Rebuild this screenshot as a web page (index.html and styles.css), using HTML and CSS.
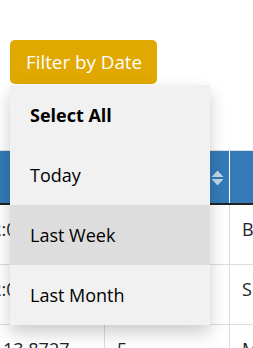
FILE: index.html
```html
<!DOCTYPE html>
<html>
<head>
<meta charset="utf-8">
<link rel="stylesheet" href="styles.css">
</head>
<body>
<div class="page">
  <div class="dropdown">
    <button class="btn">Filter by Date</button>
    <div class="menu">
      <div class="item bold">Select All</div>
      <div class="item">Today</div>
      <div class="item active">Last Week</div>
      <div class="item">Last Month</div>
    </div>
  </div>
  <div class="table-wrap">
    <table class="grid">
      <colgroup>
        <col class="w1">
        <col class="w2">
        <col class="w3">
      </colgroup>
      <thead>
        <tr>
          <th></th>
          <th class="sort"><svg class="sort-icon" width="13" height="16" viewBox="0 0 13 16"><path d="M6.5 0.5 L12.5 7 L0.5 7 Z" /><path d="M6.5 15.5 L12.5 9 L0.5 9 Z" /></svg></th>
          <th></th>
        </tr>
      </thead>
      <tbody>
        <tr><td class="ts">12:00:00</td><td></td><td>Bangkok</td></tr>
        <tr><td class="ts">12:00:00</td><td></td><td>Singapore</td></tr>
        <tr><td>13.8727</td><td>5</td><td>Manila</td></tr>
      </tbody>
    </table>
  </div>
</div>
</body>
</html>
```

FILE: styles.css
```css
html, body {
  margin: 0;
  padding: 0;
  background: #ffffff;
  overflow: hidden;
  font-family: "Open Sans", "Noto Sans", sans-serif;
  font-size: 18px;
  color: #212529;
}

.page {
  padding: 40px 10px 0;
  width: 253px;
  height: 348px;
  box-sizing: border-box;
  overflow: hidden;
}

.dropdown {
  position: relative;
  display: inline-block;
  z-index: 2;
}

.btn {
  display: block;
  margin: 0;
  border: none;
  border-radius: 5px;
  background: #e0a800;
  color: #ffffff;
  font-family: "Open Sans", "Noto Sans", sans-serif;
  font-size: 18.8px;
  line-height: 24px;
  padding: 10px 0 10px 16px;
  width: 147px;
  text-align: left;
  white-space: nowrap;
}

.menu {
  position: absolute;
  top: 45px;
  left: 0;
  width: 200px;
  background: #f1f1f1;
  box-shadow: 0 8px 16px 0 rgba(0, 0, 0, 0.2);
}

.item {
  padding: 20px 20px;
  line-height: 20px;
  color: #000000;
  white-space: nowrap;
}

.item.bold {
  font-weight: 700;
}

.item.active {
  background: #dddddd;
}

.table-wrap {
  margin: 66px 0 0 -20px;
  width: 400px;
}

.grid {
  border-collapse: collapse;
  table-layout: fixed;
  width: 400px;
}

.grid .w1 { width: 114px; }
.grid .w2 { width: 125px; }
.grid .w3 { width: 161px; }

.grid th,
.grid td {
  padding: 12px 12px 22px;
  line-height: 25px;
  text-align: left;
  white-space: nowrap;
  overflow: hidden;
  border-left: 1px solid #dddddd;
  border-right: 1px solid #dddddd;
  border-bottom: 1px solid #dddddd;
}

.grid th {
  background: #337ab7;
  color: #ffffff;
  font-weight: 700;
  padding: 13px 12px 14px;
  border-top: 1px solid #dddddd;
  border-bottom: 2px solid #222222;
  border-right: 1px solid rgba(255, 255, 255, 0.75);
}

.grid th.sort {
  text-align: right;
  padding-right: 5px;
}

.sort-icon {
  display: inline-block;
  vertical-align: middle;
  fill: rgba(255, 255, 255, 0.7);
}

.grid td.ts {
  text-indent: -22px;
}
```
